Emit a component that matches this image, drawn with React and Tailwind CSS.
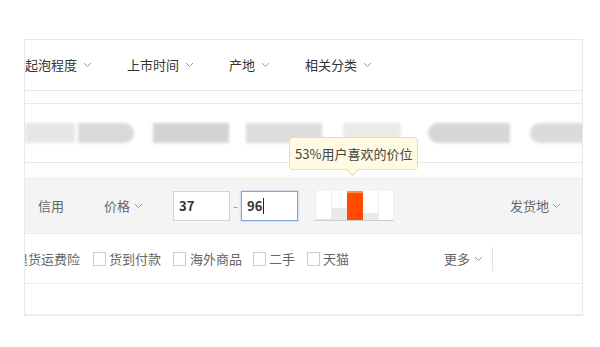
import React from 'react'

const Chevron = ({ className = '' }) => (
  <svg className={className} width="9" height="6" viewBox="0 0 9 6" fill="none">
    <polyline points="1,1 4.5,4.5 8,1" stroke="#999" strokeWidth="1" />
  </svg>
)

const Box = () => <span className="inline-block w-[13px] h-[14px] border border-[#ccc] bg-white" />

export default function App() {
  const font = { fontFamily: '"Noto Sans CJK SC", "Liberation Sans", sans-serif' }
  return (
    <div className="w-[600px] h-[347px] bg-white overflow-hidden pt-[39px]" style={font}>
      <div className="relative ml-[24px] w-[559px] h-[277px] border border-[#e8e8e8] border-b-2 border-b-[#ececec] overflow-hidden">
        {/* row 1: filters */}
        <div className="h-[51px] border-b border-[#e8e8e8] flex items-center text-[13px] text-[#333]">
          <div className="w-[102px] ml-[0px] flex items-center gap-[6px]">起泡程度<Chevron /></div>
          <div className="w-[102px] flex items-center gap-[6px]">上市时间<Chevron /></div>
          <div className="w-[76px] flex items-center gap-[6px]">产地<Chevron /></div>
          <div className="flex items-center gap-[6px]">相关分类<Chevron /></div>
        </div>
        <div className="h-[13px] border-b border-[#e8e8e8] bg-[#fdfdfd]" />

        {/* row 2: blurred brands */}
        <div className="h-[59px] border-b border-[#e8e8e8] flex items-center">
          <div className="flex items-center h-[20px] blur-[1.5px]">
            <div className="w-[50px] h-[20px] bg-[#e6e6e6]" />
            <div className="w-[56px] h-[20px] ml-[3px] rounded-r-full bg-[#d9d9d9]" />
            <div className="w-[76px] h-[20px] ml-[19px] bg-[#d3d3d3]" />
            <div className="w-[76px] h-[20px] ml-[17px] bg-[#dddddd]" />
            <div className="w-[58px] h-[20px] ml-[21px] bg-[#ebebe6]" />
            <div className="w-[82px] h-[20px] ml-[27px] rounded-l-full bg-[#d6d6d6]" />
            <div className="w-[56px] h-[20px] ml-[20px] rounded-l-full bg-[#dbdbdb]" />
          </div>
        </div>
        <div className="h-[15px] bg-[#fdfdfd]" />

        {/* row 3: credit / price */}
        <div className="h-[55px] bg-[#f4f4f4] border-t border-[#ececec] flex items-center text-[13px] text-[#666]">
          <span className="ml-[13px] w-[66px]">信用</span>
          <span className="w-[69px] flex items-center gap-[4px]">价格<Chevron /></span>
          <div className="w-[57px] h-[30px] bg-white border border-[#d4d4d4] flex items-center pl-[5px] text-[#333] font-semibold">37</div>
          <span className="w-[11px] text-center text-[#999]">-</span>
          <div className="w-[57px] h-[30px] bg-white border border-[#7ea6dc] shadow-[0_0_2px_#9fbfe8] flex items-center pl-[5px] text-[#333] font-semibold">
            96<span className="w-px h-[16px] bg-[#222] ml-px" />
          </div>
          <div className="ml-[17px] flex items-end h-[30px] border-b border-[#cfcfcf]">
            <div className="w-[16px] h-full bg-white border-l border-[#eee] flex items-end"><div className="w-full h-[1px] bg-[#e6e6e6]" /></div>
            <div className="w-[16px] h-full bg-white border-l border-[#eee] flex items-end"><div className="w-full h-[12px] bg-[#e9e9e9]" /></div>
            <div className="w-[16px] h-full bg-[#ff4a00] border-t-2 border-[#ff8a5a]" />
            <div className="w-[16px] h-full bg-white border-r border-[#eee] flex items-end"><div className="w-full h-[7px] bg-[#eaeaea]" /></div>
            <div className="w-[15px] h-full bg-white border-r border-[#eee]" />
          </div>
          <span className="ml-auto mr-[21px] flex items-center gap-[3px]">发货地<Chevron /></span>
        </div>

        {/* row 4: checkboxes */}
        <div className="h-[51px] border-t border-[#ececec] border-b border-[#e8e8e8] flex items-center text-[13px] text-[#666]">
          <span className="ml-[-10px] w-[78px]">退货运费险</span>
          <label className="w-[80px] flex items-center gap-[3px]"><Box />货到付款</label>
          <label className="w-[80px] flex items-center gap-[4px]"><Box />海外商品</label>
          <label className="w-[54px] flex items-center gap-[3px]"><Box />二手</label>
          <label className="w-[137px] flex items-center gap-[3px]"><Box />天猫</label>
          <span className="flex items-center gap-[4px]">更多<Chevron /></span>
          <span className="ml-[9px] w-px h-[24px] bg-[#e4e4e4]" />
        </div>
        <div className="h-[28px]" />

        {/* tooltip */}
        <div className="absolute left-[264px] top-[97px] h-[33px] px-[5px] flex items-center rounded-[4px] border border-[#f2dc9e] bg-[#fffbe3] text-[13px] text-[#444] whitespace-nowrap">
          53%用户喜欢的价位
          <span className="absolute left-[58px] bottom-[-5px] w-[9px] h-[9px] rotate-45 bg-[#fffbe3] border-r border-b border-[#f2dc9e]" />
        </div>
      </div>
    </div>
  )
}
